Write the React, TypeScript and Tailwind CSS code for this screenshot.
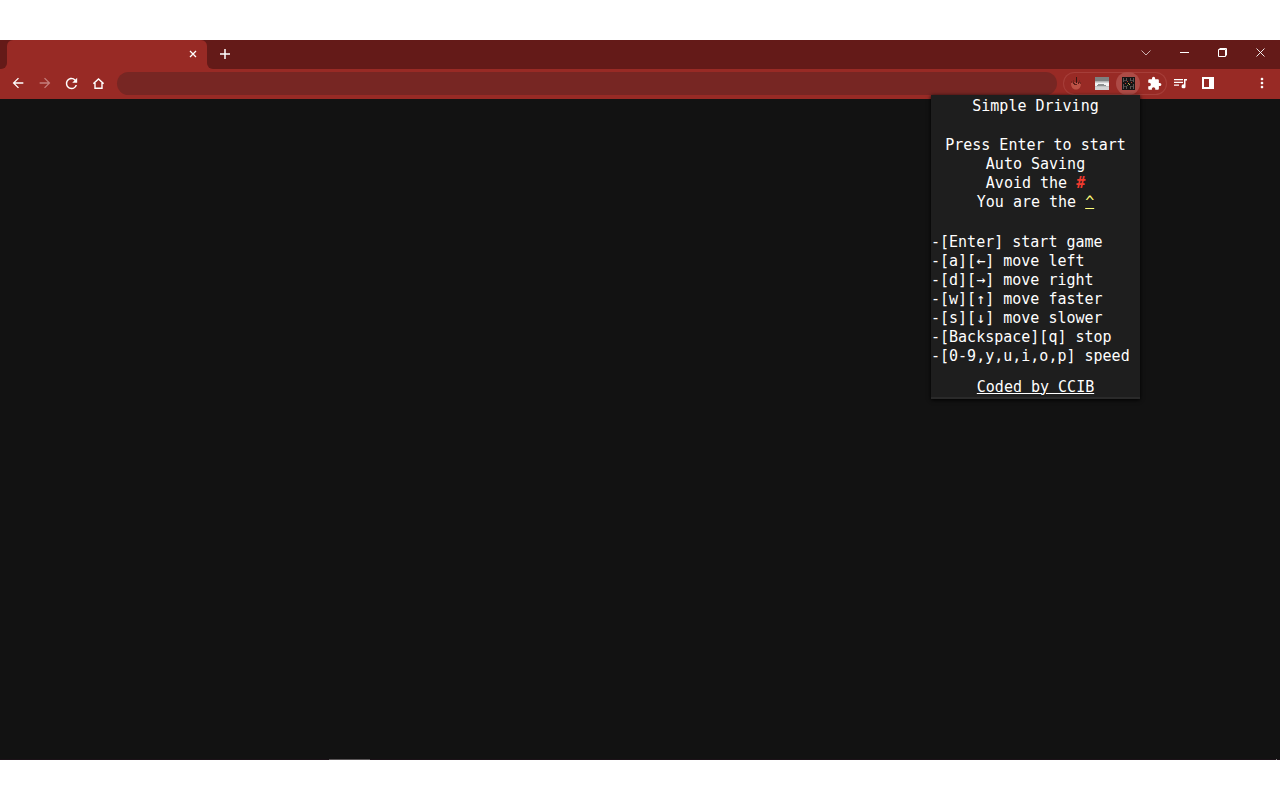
import type { ReactNode } from 'react';
import { clsx } from 'clsx';
import {
    MdArrowBack,
    MdArrowForward,
    MdExtension,
    MdMoreVert,
    MdRefresh,
} from 'react-icons/md';

interface IconButtonProps {
    label: string;
    children: ReactNode;
    className?: string;
}

function IconButton({ label, children, className }: IconButtonProps) {
    return (
        <button
            type="button"
            aria-label={label}
            className={clsx('flex h-[23px] shrink-0 items-center justify-center', className)}
        >
            {children}
        </button>
    );
}

function TabStrip() {
    return (
        <div className="flex h-[29px] bg-[#982a25] text-white">
            <div className="w-[7px] rounded-br-md bg-[#641a18]" />
            <div className="w-[200px] bg-[#641a18]">
                <div className="flex h-full items-center justify-end rounded-t-md bg-[#982a25] pr-1 pb-0.5">
                    <IconButton label="Close tab" className="w-5">
                        <svg width="8" height="8" viewBox="0 0 8 8" stroke="currentColor" strokeWidth="1.3">
                            <path d="M1 1l6 6M7 1l-6 6" />
                        </svg>
                    </IconButton>
                </div>
            </div>
            <div className="flex flex-1 items-center justify-between rounded-bl-md bg-[#641a18] pr-px pb-0.5 pl-1">
                <IconButton label="New tab" className="w-7">
                    <svg width="10" height="10" viewBox="0 0 10 10" stroke="currentColor" strokeWidth="1.5">
                        <path d="M5 0v10M0 5h10" />
                    </svg>
                </IconButton>
                <div className="flex pb-0.5">
                    <IconButton label="Search tabs" className="w-[38px]">
                        <svg width="10" height="6" viewBox="0 0 10 6" fill="none" stroke="#d9c4c3" strokeWidth="0.9">
                            <path d="M.5 .5L5 5L9.5 .5" />
                        </svg>
                    </IconButton>
                    <IconButton label="Minimize" className="w-[38px]">
                        <svg width="9" height="9" viewBox="0 0 9 9" fill="currentColor">
                            <path d="M0 4h9v1H0z" />
                        </svg>
                    </IconButton>
                    <IconButton label="Restore" className="w-[38px]">
                        <svg width="9" height="9" viewBox="0 0 9 9" fill="none" stroke="currentColor">
                            <path d="M.5 1.500h7v7h-7zM1.500 .500h7v7" />
                        </svg>
                    </IconButton>
                    <IconButton label="Close" className="w-[38px]">
                        <svg width="9" height="9" viewBox="0 0 9 9" stroke="currentColor" strokeWidth="0.9">
                            <path d="M.5 .5l8 8M8.5 .5l-8 8" />
                        </svg>
                    </IconButton>
                </div>
            </div>
        </div>
    );
}

function PointerIcon() {
    return (
        <svg width="12" height="13" viewBox="0 0 12 13">
            <path d="M1 6c2-1 8-1 10 0 0 4-1.500 6.500-5 6.500S1 10 1 6z" fill="#bd5246" />
            <path d="M6 0h1v6H6z" fill="#3b1512" />
            <path d="M3 5h1v1h1v1h2v1H4V7H3zM8 5h1v2H8z" fill="#5c1e1a" />
            <path d="M1 4h1v2H1zM3 3h1v2H3zM9 3h1v3H9zM10 5h1v2h-1z" fill="#7c2620" />
        </svg>
    );
}

function DriveIcon() {
    return (
        <svg width="14" height="13" viewBox="0 0 14 13">
            <path d="M0 0h14v13H0z" fill="#d3d3d3" />
            <path d="M0 0h14v4H0z" fill="#7d8080" />
            <path d="M0 4h14v1H0z" fill="#b4b6b6" />
            <path d="M0 6h14v3H0z" fill="#f2f2f2" />
            <path d="M3 7h6v1h2v1H2V8h1z" fill="#8c8f8f" />
            <path d="M0 9h14v1H0z" fill="#c0c2c2" />
        </svg>
    );
}

function GameIcon() {
    return (
        <svg width="13" height="13" viewBox="0 0 13 13">
            <path d="M0 0h13v13H0z" fill="#171515" />
            <path d="M1 1h1v4H1zM4 1h1v3H4zM8 1h1v3H8zM11 1h1v4h-1zM1 7h1v5H1zM4 9h1v3H4zM8 9h1v3H8zM11 7h1v5h-1z" fill="#5a5555" />
            <path d="M2 3h2v1H2zM9 3h2v1H9zM2 9h2v1H2zM9 9h2v1H9z" fill="#484444" />
            <path d="M5 4h1v1H5zM9 5h1v1H9zM3 6h1v1H3z" fill="#b63931" />
            <path d="M6 6h1v1H6zM7 7h1v1H7z" fill="#c3b34f" />
            <path d="M5 8h1v1H5z" fill="#4e8149" />
        </svg>
    );
}

function Toolbar() {
    return (
        <div className="flex h-[30px] items-center bg-[#982a25] pr-[5px] pb-0.5 pl-1 text-white">
            <IconButton label="Back" className="w-[27px]">
                <MdArrowBack size={16} />
            </IconButton>
            <IconButton label="Forward" className="w-[27px] text-[#c57f7c]">
                <MdArrowForward size={16} />
            </IconButton>
            <IconButton label="Reload" className="w-[27px]">
                <MdRefresh size={17} />
            </IconButton>
            <IconButton label="Home" className="w-[27px]">
                <svg width="11" height="11" viewBox="0 0 11 11" fill="none" stroke="currentColor" strokeWidth="1.4">
                    <path d="M.4 5.700L5.500 1l5.100 4.700M2 5v5.200h7V5" />
                </svg>
            </IconButton>
            <input
                type="text"
                aria-label="Address"
                className="ml-[5px] h-[23px] min-w-0 flex-1 rounded-full bg-[#772623] px-4 font-['Liberation_Sans'] text-xs outline-none"
            />
            <div className="ml-1.5 flex rounded-full inset-ring inset-ring-[#a63e39]">
                <IconButton label="Pointer" className="w-[26px]">
                    <PointerIcon />
                </IconButton>
                <IconButton label="Drive" className="w-[26px]">
                    <DriveIcon />
                </IconButton>
                <div className="relative px-px">
                    <IconButton label="Simple Driving" className="w-6 rounded-full bg-[#ad4b46]">
                        <GameIcon />
                    </IconButton>
                    <DrivingPopup />
                </div>
                <IconButton label="Extensions" className="w-[26px]">
                    <MdExtension size={15} />
                </IconButton>
            </div>
            <IconButton label="Media" className="w-[27px]">
                <svg width="13" height="11" viewBox="0 0 13 11" fill="currentColor">
                    <path d="M0 1h9v1.300H0zM0 3.700h9V5H0zM0 6.500h5v1.300H0z" />
                    <path d="M10 1h3v1.500h-1.500V8A2 2 0 1 1 10 6.400z" />
                </svg>
            </IconButton>
            <IconButton label="Side panel" className="w-[27px]">
                <svg width="12" height="12" viewBox="0 0 12 12" fill="currentColor" fillRule="evenodd">
                    <path d="M0 0h12v12H0zM2 2v8h5V2z" />
                </svg>
            </IconButton>
            <IconButton label="Menu" className="ml-[27px] w-[27px]">
                <MdMoreVert size={16} />
            </IconButton>
        </div>
    );
}

const controls = [
    '-[Enter] start game',
    '-[a][←] move left',
    '-[d][→] move right',
    '-[w][↑] move faster',
    '-[s][↓] move slower',
    '-[Backspace][q] stop',
    '-[0-9,y,u,i,o,p] speed',
];

function DrivingPopup() {
    return (
        <section className="absolute top-full -right-px z-10 w-[209px] -translate-x-0.5 border-b-2 border-[#2a2a2a] bg-[#1e1e1e] pt-0.5 font-['DejaVu_Sans_Mono',monospace] text-[15px] leading-[19px] whitespace-nowrap text-white shadow-[0_1px_4px_#000]">
            <h1 className="text-center">Simple Driving</h1>
            <div className="mt-5 text-center">
                <p>Press Enter to start</p>
                <p>Auto Saving</p>
                <p>
                    Avoid the <span className="font-bold text-[#f03a2e]">#</span>
                </p>
                <p>
                    You are the <span className="text-[#ffff7a] underline">^</span>
                </p>
            </div>
            <ul className="mt-[21px]">
                {controls.map((line) => (
                    <li key={line}>{line}</li>
                ))}
            </ul>
            <p className="mt-3 text-center">
                <a href="#ccib" className="underline">
                    Coded by CCIB
                </a>
            </p>
        </section>
    );
}

export default function App() {
    return (
        <div className="flex min-h-screen flex-col bg-white py-10">
            <TabStrip />
            <Toolbar />
            <main className="flex-1 bg-[#121212]" />
            <footer className="flex h-px justify-between bg-[#1c1218]">
                <div className="ml-[329px] w-[41px] bg-[#5a5557]" />
                <div className="mr-[3px] w-px bg-[#8a8a8a]" />
            </footer>
        </div>
    );
}
